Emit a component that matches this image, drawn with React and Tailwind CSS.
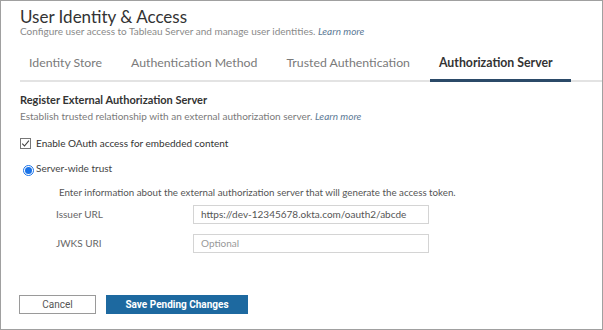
import React from "react";

export default function App() {
  const tabs = ["Identity Store", "Authentication Method", "Trusted Authentication", "Authorization Server"];
  return (
    <div className="w-[603px] h-[330px] bg-white border border-[#a0a0a0] flex flex-col text-[#333333]" style={{ fontFamily: "Lato, 'Open Sans', sans-serif" }}>
      <div className="pl-[19px] pt-[6px]">
        <div className="text-[17px] leading-[20px] text-[#333]">User Identity &amp; Access</div>
        <div className="text-[10px] leading-[12px] -mt-[2px] text-[#8a8a8a]">
          Configure user access to Tableau Server and manage user identities. <span className="italic text-[#5d7a96]">Learn more</span>
        </div>
      </div>
      <div className="ml-[19px] mt-[18px] flex gap-[2px] border-b-2 border-[#e3e3e3]">
        {tabs.map((t, i) => (
          <div
            key={t}
            className={
              i === 3
                ? "pl-[9px] pr-[18px] pb-[8px] text-[12.3px] leading-[16px] font-bold text-[#333] border-b-[3px] border-[#2b4a68] -mb-[2px]"
                : "pl-[9px] pr-[18px] pb-[9px] text-[12.3px] leading-[16px] text-[#7a7a7a]"
            }
          >
            {t}
          </div>
        ))}
      </div>
      <div className="pl-[19px] pt-[11px] flex flex-col">
        <div className="text-[11px] leading-[14px] font-bold text-[#333]">Register External Authorization Server</div>
        <div className="text-[10px] leading-[12px] mt-[3px] text-[#7a7a7a]">
          Establish trusted relationship with an external authorization server. <span className="italic text-[#5d7a96]">Learn more</span>
        </div>
        <div className="flex items-center mt-[14px] gap-[4px] h-[14px]">
          <div className="w-[11px] h-[11px] border border-[#777] flex items-center justify-center bg-white">
            <svg width="9" height="9" viewBox="0 0 9 9"><path d="M1.2 4.6 L3.5 7 L7.9 1.6" fill="none" stroke="#444" strokeWidth="1.1" /></svg>
          </div>
          <span className="text-[10px] leading-[14px] text-[#333] ml-[1px]">Enable OAuth access for embedded content</span>
        </div>
        <div className="flex items-center mt-[11px] ml-[3px] h-[14px]">
          <div className="w-[11px] h-[11px] rounded-full border border-[#1a73e8] flex items-center justify-center bg-white mt-[4px]">
            <div className="w-[7px] h-[7px] rounded-full bg-[#1a73e8]" />
          </div>
          <span className="text-[10px] leading-[14px] text-[#444] ml-[2px]">Server-wide trust</span>
        </div>
        <div className="pl-[36px] flex flex-col">
          <div className="text-[9.75px] leading-[12px] mt-[11px] ml-[3px] text-[#555]">Enter information about the external authorization server that will generate the access token.</div>
          <div className="flex items-center mt-[7px]">
            <div className="w-[137px] text-[10px] text-[#666]">Issuer URL</div>
            <div className="w-[236px] h-[19px] border border-[#d4d4d4] flex items-center px-[7px] text-[10px] text-[#555]">https://dev-12345678.okta.com/oauth2/abcde</div>
          </div>
          <div className="flex items-center mt-[10px]">
            <div className="w-[137px] text-[10px] text-[#666]">JWKS URI</div>
            <div className="w-[236px] h-[19px] border border-[#d4d4d4] flex items-center px-[7px] text-[10px] text-[#999]">Optional</div>
          </div>
        </div>
      </div>
      <div className="flex-1" />
      <div className="pl-[18px] pb-[15px] flex gap-[10px]">
        <button className="w-[77px] h-[19px] border border-[#9a9a9a] bg-white text-[10px] text-[#555] flex items-center justify-center" style={{ fontFamily: "'Roboto', sans-serif" }}>Cancel</button>
        <button className="w-[142px] h-[19px] bg-[#1d69a0] text-white text-[10px] font-bold flex items-center justify-center" style={{ fontFamily: "'Roboto', sans-serif" }}>Save Pending Changes</button>
      </div>
    </div>
  );
}
